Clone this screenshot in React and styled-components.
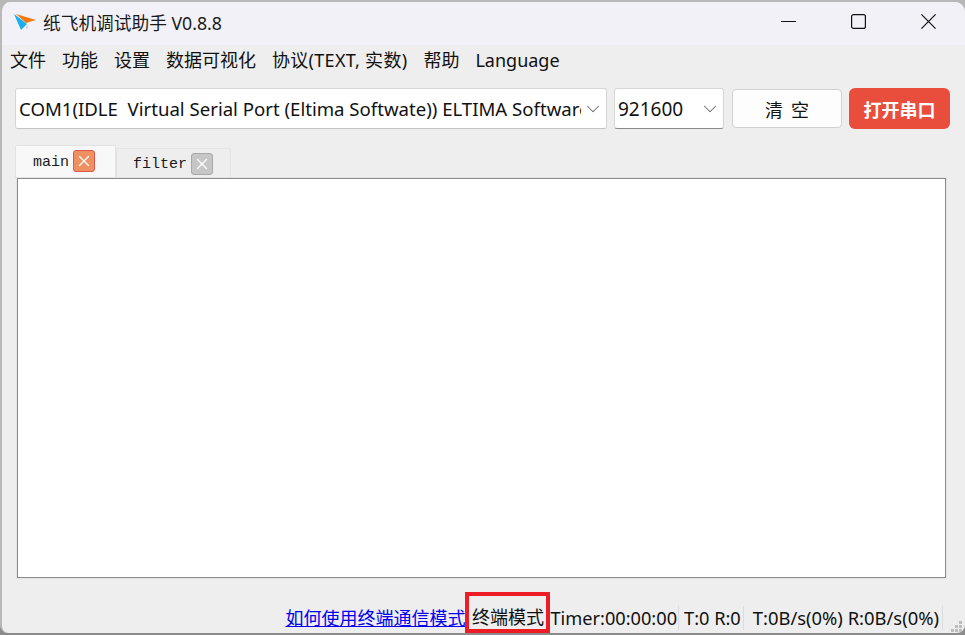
import React from "react";
import styled, { createGlobalStyle } from "styled-components";
import { X, ChevronDown } from "lucide-react";

const Global = createGlobalStyle`
  html, body {
    margin: 0;
    padding: 0;
    width: 965px;
    height: 635px;
    overflow: hidden;
    background: linear-gradient(#b8b8b8 0 40px, #8c8c8c 600px);
    font-family: "Noto Sans", "Noto Sans CJK SC", sans-serif;
  }
`;

const Win = styled.div`
  width: 965px;
  height: 631px;
  margin-top: 2px;
  background: #eeeeee;
  border-radius: 10px 10px 8px 8px;
  overflow: hidden;
  display: flex;
  flex-direction: column;
  color: #111;
  box-sizing: border-box;
  border-left: 2px solid #b9b9b9;
`;

const TitleBar = styled.div`
  height: 43px;
  flex: none;
  box-sizing: border-box;
  background: #f3f1f8;
  display: flex;
  align-items: center;
  padding: 0 0 4px 11px;
`;

const AppName = styled.span`
  font-size: 17.7px;
  margin-left: 6px;
  color: #1a1a1a;
`;

const WinButtons = styled.div`
  margin-left: auto;
  display: flex;
  align-items: center;
  gap: 55px;
  padding-right: 29px;
`;

const MenuBar = styled.div`
  display: flex;
  gap: 16px;
  padding: 2px 0 0 8px;
  height: 43px;
  box-sizing: border-box;
  flex: none;
  font-size: 18px;
  line-height: 26px;
`;

const MenuItem = styled.span`
  letter-spacing: ${(p) => p.$ls || 0}px;
`;

const Toolbar = styled.div`
  display: flex;
  align-items: stretch;
  height: 41px;
  padding-left: 13px;
  flex: none;
`;

const Select = styled.div`
  width: ${(p) => p.$w}px;
  margin-right: ${(p) => p.$mr}px;
  box-sizing: border-box;
  background: #fff;
  border: 1px solid #d6d6d6;
  border-bottom: 1px solid ${(p) => (p.$dark ? "#8a8a8a" : "#c4c4c4")};
  border-radius: 3px;
  display: flex;
  align-items: center;
  padding: 0 2px 0 3px;
  font-size: ${(p) => p.$size}px;
`;

const SelectText = styled.span`
  flex: 1;
  overflow: hidden;
  white-space: nowrap;
  margin-right: 1px;
`;

const Button = styled.button`
  width: ${(p) => p.$w}px;
  height: ${(p) => p.$h}px;
  margin: ${(p) => p.$m};
  box-sizing: border-box;
  border-radius: ${(p) => (p.$primary ? 6 : 4)}px;
  border: ${(p) => (p.$primary ? "none" : "1px solid #d2d2d2")};
  background: ${(p) => (p.$primary ? "#e94e3d" : "#fdfdfd")};
  color: ${(p) => (p.$primary ? "#fff" : "#111")};
  font-family: "Noto Sans CJK SC", sans-serif;
  font-size: 18px;
  font-weight: ${(p) => (p.$primary ? 700 : 400)};
  padding: 0;
  white-space: pre;
`;

const TabRow = styled.div`
  display: flex;
  align-items: flex-end;
  height: 49px;
  padding-left: 13px;
  flex: none;
`;

const Tab = styled.div`
  height: ${(p) => (p.$active ? 33 : 30)}px;
  width: ${(p) => (p.$active ? 101 : 115)}px;
  box-sizing: border-box;
  background: ${(p) => (p.$active ? "#f8f8f8" : "#eeeeee")};
  border: 1px solid #e3e3e3;
  border-bottom: none;
  border-radius: 2px 2px 0 0;
  display: flex;
  align-items: center;
  gap: 4px;
  padding: 0 0 ${(p) => (p.$active ? 2 : 0)}px ${(p) => (p.$active ? 17 : 16)}px;
  font-family: "Liberation Mono", monospace;
  font-size: 15px;
  color: #1a1a1a;
`;

const TabLabel = styled.span`
  margin-top: 2px;
`;

const TabClose = styled.span`
  width: 22px;
  height: 22px;
  box-sizing: border-box;
  border-radius: 3px;
  border: 1.5px solid ${(p) => (p.$active ? "#e2574c" : "#a9a9a9")};
  background: ${(p) => (p.$active ? "#ee9062" : "#c6c6c6")};
  color: #fff;
  display: flex;
  align-items: center;
  justify-content: center;
`;

const Terminal = styled.div`
  height: 400px;
  margin: 0 19px 0 15px;
  flex: none;
  box-sizing: border-box;
  background: #fff;
  border: 1px solid #8c8c8c;
  outline: 1px solid #e4e4e4;
`;

const StatusBar = styled.div`
  flex: 1;
  display: flex;
  justify-content: flex-end;
  align-items: flex-end;
  padding-right: 3px;
  font-size: 18px;
  line-height: 24px;
`;

const HelpLink = styled.a`
  color: #0000ee;
  text-decoration: underline;
  margin-bottom: 3px;
`;

const ModeLabel = styled.span`
  box-sizing: border-box;
  height: 41px;
  width: 85px;
  border: 4px solid #ee1c25;
  display: flex;
  align-items: flex-end;
  justify-content: center;
  white-space: nowrap;
`;

const Cell = styled.span`
  margin-bottom: 3px;
  padding: 0 ${(p) => p.$pr}px 0 ${(p) => p.$pl}px;
  border-right: 1px solid #dcdcdc;
  white-space: pre;
  font-size: ${(p) => p.$size}px;
`;

const Grip = styled.svg`
  margin: 0 0 1px 8px;
`;

function PlaneLogo() {
  return (
    <svg width="24" height="18" viewBox="0 0 24 18">
      <path d="M3 1 L23 7 L13 10 Z" fill="#f5780f" />
      <path d="M1 1 L14 11 L8 17 Z" fill="#19aef0" />
      <path d="M15 12 L13 14 L14 17 Z" fill="#c9c9c9" />
    </svg>
  );
}

function MinIcon() {
  return (
    <svg width="15" height="15" viewBox="0 0 15 15">
      <path d="M0 7.5 H15" stroke="#111" strokeWidth="1.1" />
    </svg>
  );
}

function MaxIcon() {
  return (
    <svg width="15" height="15" viewBox="0 0 15 15">
      <rect x="0.6" y="0.6" width="13.8" height="13.8" rx="2" fill="none" stroke="#111" strokeWidth="1.2" />
    </svg>
  );
}

function CloseIcon() {
  return (
    <svg width="15" height="15" viewBox="0 0 15 15">
      <path d="M0.4 0.4 L14.6 14.6 M14.6 0.4 L0.4 14.6" stroke="#111" strokeWidth="1.2" />
    </svg>
  );
}

function GripIcon() {
  const dots = [
    [8, 0],
    [4, 4],
    [8, 4],
    [0, 8],
    [4, 8],
    [8, 8],
  ];
  return (
    <Grip width="11" height="11" viewBox="0 0 11 11">
      {dots.map(([x, y]) => (
        <rect key={`${x}-${y}`} x={x} y={y} width="3" height="3" fill="#bdbdbd" />
      ))}
    </Grip>
  );
}

export default function App() {
  const menus = [
    { label: "文件" },
    { label: "功能" },
    { label: "设置" },
    { label: "数据可视化" },
    { label: "协议(TEXT, 实数)", ls: 0.3 },
    { label: "帮助" },
    { label: "Language" },
  ];

  return (
    <>
      <Global />
      <Win>
        <TitleBar>
          <PlaneLogo />
          <AppName>纸飞机调试助手 V0.8.8</AppName>
          <WinButtons>
            <MinIcon />
            <MaxIcon />
            <CloseIcon />
          </WinButtons>
        </TitleBar>
        <MenuBar>
          {menus.map((m) => (
            <MenuItem key={m.label} $ls={m.ls}>{m.label}</MenuItem>
          ))}
        </MenuBar>
        <Toolbar>
          <Select $w={592} $mr={7} $size={18.6}>
            <SelectText>COM1(IDLE&nbsp; Virtual Serial Port (Eltima Softwate)) ELTIMA Software</SelectText>
            <ChevronDown size={22} strokeWidth={1.1} color="#666" />
          </Select>
          <Select $w={110} $mr={8} $size={19} $dark>
            <SelectText>921600</SelectText>
            <ChevronDown size={22} strokeWidth={1.1} color="#666" />
          </Select>
          <Button $w={110} $h={39} $m="1px 7px 0 0">清  空</Button>
          <Button $primary $w={101} $h={41} $m="0">打开串口</Button>
        </Toolbar>
        <TabRow>
          <Tab $active>
            <TabLabel>main</TabLabel>
            <TabClose $active><X size={18} strokeWidth={1.7} /></TabClose>
          </Tab>
          <Tab>
            <TabLabel>filter</TabLabel>
            <TabClose><X size={18} strokeWidth={1.7} /></TabClose>
          </Tab>
        </TabRow>
        <Terminal />
        <StatusBar>
          <HelpLink href="#">如何使用终端通信模式</HelpLink>
          <ModeLabel>终端模式</ModeLabel>
          <Cell $size={18.2} $pl={0} $pr={1}>Timer:00:00:00</Cell>
          <Cell $size={18.2} $pl={5} $pr={2}>T:0 R:0</Cell>
          <Cell $size={18.4} $pl={9} $pr={3}>T:0B/s(0%) R:0B/s(0%)</Cell>
          <GripIcon />
        </StatusBar>
      </Win>
    </>
  );
}
